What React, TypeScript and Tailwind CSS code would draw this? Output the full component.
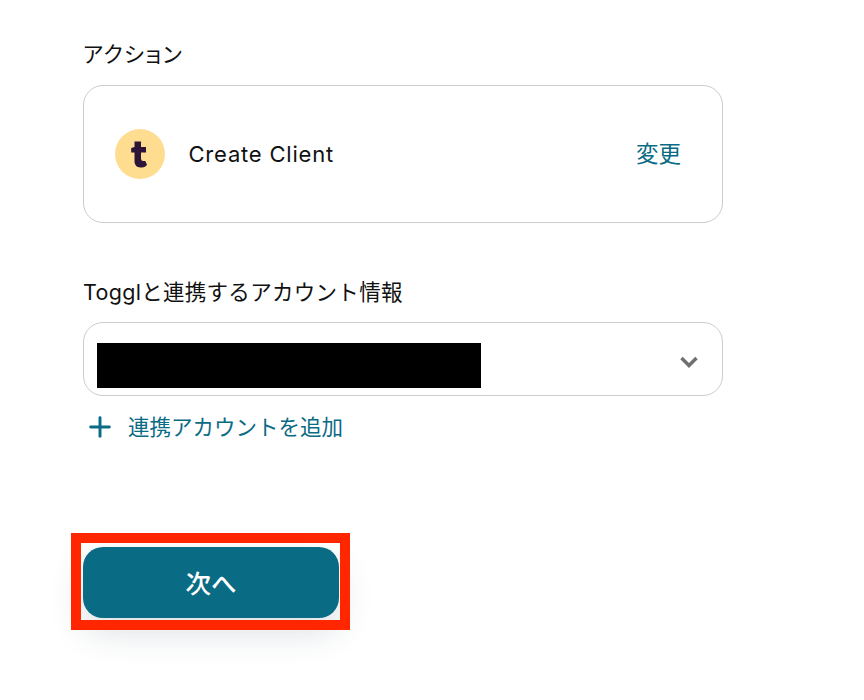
import React from 'react';
import { Plus } from 'lucide-react';

const font = 'font-["Inter","Noto_Sans_CJK_JP",sans-serif]';

function TogglLogo() {
  return (
    <svg width="50" height="50" viewBox="0 0 50 50" className="shrink-0">
      <circle cx="25" cy="25" r="25" fill="#fedc90" />
      <path
        d="M19.500 12.500h6.500v5.500h5v5.500h-5v6c0 1.700 1 2.500 2.300 2.500h2l1.700 3.800c-1.200 1.800-2.900 2.700-5 2.700h-1.500c-3.800 0-6-2.500-6-6.200v-8.800h-3.300v-4.500l3.300-1z"
        fill="#2c1338"
      />
    </svg>
  );
}

export default function App() {
  return (
    <div className={`${font} bg-white w-[864px] h-[700px] overflow-hidden pt-[41px] pl-[83px]`}>
      {/* Action */}
      <p className="text-[21.5px] leading-[26px] font-normal text-[#111] tracking-[1.400px] [font-feature-settings:'palt']">アクション</p>
      <div className="mt-[18px] w-[640px] h-[138px] border border-[#cccccc] rounded-[20px] flex items-center pl-[31px] pr-[41px]">
        <TogglLogo />
        <span className="ml-[23.500px] text-[22px] tracking-[0.800px] text-[#111]">Create Client</span>
        <button className="ml-auto text-[22.500px] font-normal text-[#0a6b84]">変更</button>
      </div>

      {/* Account */}
      <p className="mt-[56px] text-[21.5px] leading-[26px] font-normal text-[#111] tracking-[0.300px]">Togglと連携するアカウント情報</p>
      <div className="mt-[17px] w-[640px] h-[74px] border border-[#cccccc] rounded-[20px] flex items-center pl-[13px] pr-[22px]">
        <div className="w-[384px] h-[45px] mt-[13px] bg-black" />
        <svg width="20" height="14" viewBox="0 0 20 14" fill="none" className="ml-auto mt-[5px] mr-[1px] text-[#6f6f6f]">
          <path d="M2.500 3l7.500 7.500L17.500 3" stroke="currentColor" strokeWidth="3.500" />
        </svg>
      </div>
      <button className="mt-[15px] ml-[0.500px] flex items-center gap-[12.500px] text-[#0a6b84]">
        <Plus size={32} strokeWidth={2.200} />
        <span className="text-[21.5px] leading-[28px] font-normal">連携アカウントを追加</span>
      </button>

      {/* Next */}
      <div className="relative mt-[104px] w-[257px] h-[71px]">
        <button className="w-[256px] h-[71px] pt-[3px] rounded-[20px] bg-[#0a6b84] text-white text-[25.500px] font-medium shadow-[0_14px_34px_rgba(40,60,80,0.16)]">次へ</button>
        <div className="absolute -left-[12px] -top-[14px] w-[279px] h-[97px] border-[10px] border-[#ff2600] pointer-events-none" />
      </div>
    </div>
  );
}
